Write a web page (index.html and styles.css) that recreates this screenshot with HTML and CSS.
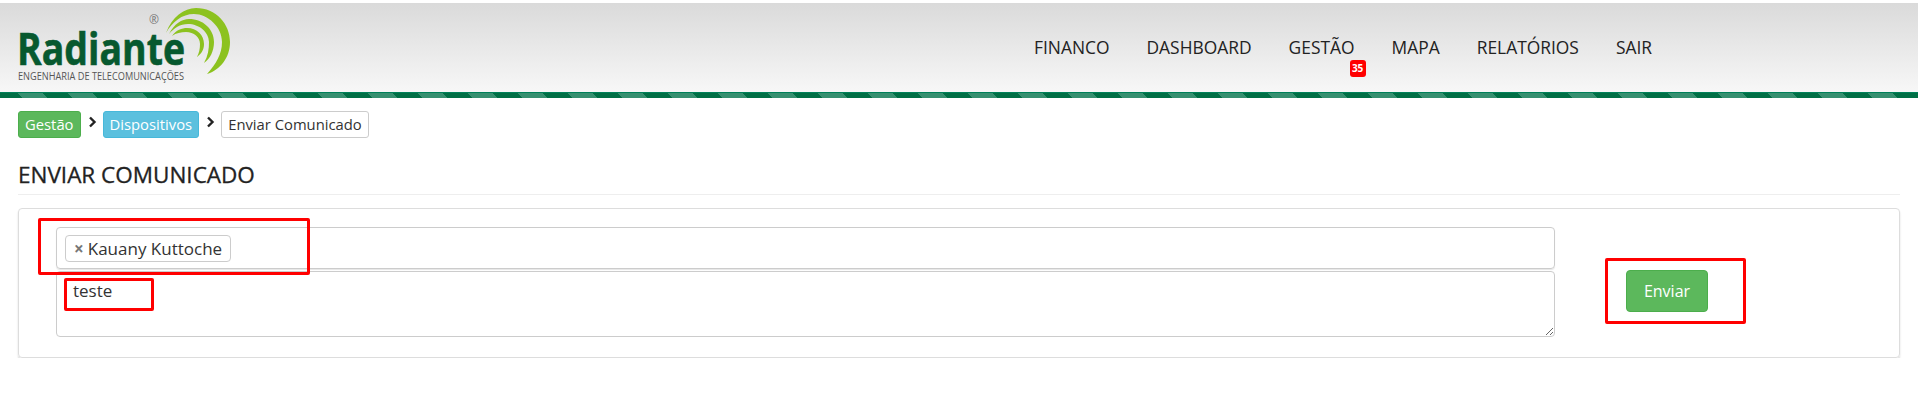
FILE: index.html
```html
<!DOCTYPE html>
<html lang="pt-BR">
<head>
    <meta charset="UTF-8">
    <title>Enviar Comunicado</title>
    <link rel="stylesheet" href="styles.css">
</head>
<body>
    <header>
        <svg class="logo" viewBox="0 0 240 89" width="240" height="89">
            <path fill="#8cc21f" d="M166 30 C172 14 184 5 196 5 C216 5 230 21 230 39 C230 55 220 67 207 71 C216 61 222 51 222 39 C222 24 208 11 194 11 C182 11 172 19 166 30 Z"/>
            <path fill="#8cc21f" d="M169 31 C174 21 182 16 189 16 C203 16 214 26 214 39 C214 48 210 56 204 60 C208 53 209 46 209 39 C209 29 199 21 188 21 C180 21 174 25 169 31 Z"/>
            <path fill="#8cc21f" d="M172 33 C176 27 182 25 187 25 C197 25 204 32 204 41 C204 47 201 51 197 54 C199 50 200 46 200 41 C200 34 194 29 186 29 C181 29 176 30 172 33 Z"/>
            <text class="logo-reg" x="149" y="21">®</text>
            <text class="logo-name" x="17" y="62" textLength="168" lengthAdjust="spacingAndGlyphs">Radiante</text>
            <text class="logo-sub" x="18" y="77" textLength="166" lengthAdjust="spacingAndGlyphs">ENGENHARIA DE TELECOMUNICAÇÕES</text>
        </svg>
        <nav class="menu">
            <a href="#">FINANCO</a>
            <a href="#">DASHBOARD</a>
            <a href="#" class="has-badge">GESTÃO<span class="badge">35</span></a>
            <a href="#">MAPA</a>
            <a href="#">RELATÓRIOS</a>
            <a href="#">SAIR</a>
        </nav>
    </header>
    <div class="stripe"></div>

    <main>
        <div class="breadcrumb">
            <span class="crumb green">Gestão</span>
            <svg class="chevron" viewBox="0 0 9 12" width="9" height="12"><path d="M2 1.5 L6.5 6 L2 10.500" fill="none" stroke="#222" stroke-width="2.400"/></svg>
            <span class="crumb blue">Dispositivos</span>
            <svg class="chevron" viewBox="0 0 9 12" width="9" height="12"><path d="M2 1.5 L6.5 6 L2 10.500" fill="none" stroke="#222" stroke-width="2.400"/></svg>
            <span class="crumb plain">Enviar Comunicado</span>
        </div>

        <h2>ENVIAR COMUNICADO</h2>

        <section class="panel">
            <div class="fields">
                <div class="tag-input">
                    <span class="tag"><span class="tag-x">×</span>Kauany Kuttoche</span>
                </div>
                <textarea class="message">teste</textarea>
            </div>
            <button class="send">Enviar</button>

            <div class="mark mark-tag"></div>
            <div class="mark mark-text"></div>
            <div class="mark mark-send"></div>
        </section>
    </main>
</body>
</html>
```

FILE: styles.css
```css
* {
    box-sizing: border-box;
}

body {
    margin: 0;
    font-family: "Open Sans", sans-serif;
    color: #333;
    background-color: #fff;
}

/* Header */
header {
    display: flex;
    height: 89px;
    margin-top: 3px;
    background: linear-gradient(#dadada, #f7f7f7);
}

.logo {
    flex: none;
}

.logo-name {
    font-family: "Open Sans", sans-serif;
    font-size: 45px;
    font-weight: 700;
    fill: #07592f;
    stroke: #07592f;
    stroke-width: 0.6px;
}

.logo-sub {
    font-family: "Open Sans", sans-serif;
    font-size: 10px;
    fill: #555;
}

.logo-reg {
    font-family: "Open Sans", sans-serif;
    font-size: 12px;
    fill: #777;
}

.menu {
    display: flex;
    gap: 37px;
    margin-left: 794px;
    padding-top: 32px;
}

.menu a {
    position: relative;
    height: 24px;
    color: #222;
    font-size: 17.4px;
    line-height: 24px;
    text-decoration: none;
}

.badge {
    position: absolute;
    left: 61px;
    top: 25px;
    width: 16px;
    height: 17px;
    border-radius: 3px;
    background-color: #f00;
    color: #fff;
    font-size: 10px;
    font-weight: 700;
    line-height: 17px;
    text-align: center;
}

.stripe {
    height: 6px;
    border-top: 1px solid #00805a;
    background: repeating-linear-gradient(45deg, #006f45 0 15.56px, #369070 15.56px 33.24px, #006f45 33.24px 35.36px);
}

/* Breadcrumb */
main {
    padding: 13px 18px 0;
}

.breadcrumb {
    display: flex;
    align-items: flex-start;
    height: 27px;
}

.crumb {
    height: 27px;
    padding: 0 6px;
    border: 1px solid transparent;
    border-radius: 3px;
    font-size: 14.8px;
    line-height: 25px;
}

.crumb.green {
    background-color: #5cb85c;
    border-color: #4cae4c;
    color: #fff;
}

.crumb.blue {
    background-color: #5bc0de;
    border-color: #46b8da;
    color: #fff;
}

.crumb.plain {
    border-color: #ccc;
    color: #333;
}

.chevron {
    margin: 5px 6px 0 7px;
}

h2 {
    height: 35px;
    margin: 22px 0 13px;
    border-bottom: 1px solid #eee;
    color: #222;
    font-size: 22.5px;
    font-weight: 400;
    line-height: 30px;
    -webkit-text-stroke: 0.3px #222;
}

/* Panel */
.panel {
    position: relative;
    display: flex;
    align-items: flex-start;
    gap: 71px;
    height: 150px;
    padding: 18px 0 0 37px;
    border: 1px solid #ddd;
    border-radius: 4px;
    box-shadow: 0 2px 2px rgba(0, 0, 0, 0.15);
}

.fields {
    display: flex;
    flex-direction: column;
    gap: 2px;
    width: 1499px;
}

.tag-input {
    height: 42px;
    padding: 7px 8px;
    border: 1px solid #ccc;
    border-radius: 4px;
    box-shadow: 0 1px 1px rgba(0, 0, 0, 0.1);
}

.tag {
    display: inline-block;
    height: 27px;
    padding: 0 8px;
    border: 1px solid #ccc;
    border-radius: 4px;
    color: #333;
    font-size: 17px;
    line-height: 25px;
}

.tag-x {
    margin-right: 4px;
    color: #777;
    font-weight: 700;
}

.message {
    display: block;
    width: 100%;
    height: 66px;
    padding: 7px 16px;
    border: 1px solid #ccc;
    border-radius: 4px;
    color: #333;
    font-family: "Open Sans", sans-serif;
    font-size: 17px;
    line-height: 24px;
    outline: none;
}

.send {
    width: 82px;
    height: 42px;
    margin-top: 43px;
    border: 1px solid #4cae4c;
    border-radius: 4px;
    background-color: #5cb85c;
    color: #fff;
    font-family: "Open Sans", sans-serif;
    font-size: 16px;
}

/* Red annotation boxes drawn over the form */
.mark {
    position: absolute;
    border: 3px solid #f00;
    border-radius: 2px;
    pointer-events: none;
}

.mark-tag {
    left: 19px;
    top: 9px;
    width: 272px;
    height: 57px;
}

.mark-text {
    left: 45px;
    top: 69px;
    width: 90px;
    height: 33px;
}

.mark-send {
    left: 1586px;
    top: 49px;
    width: 141px;
    height: 66px;
}
```
